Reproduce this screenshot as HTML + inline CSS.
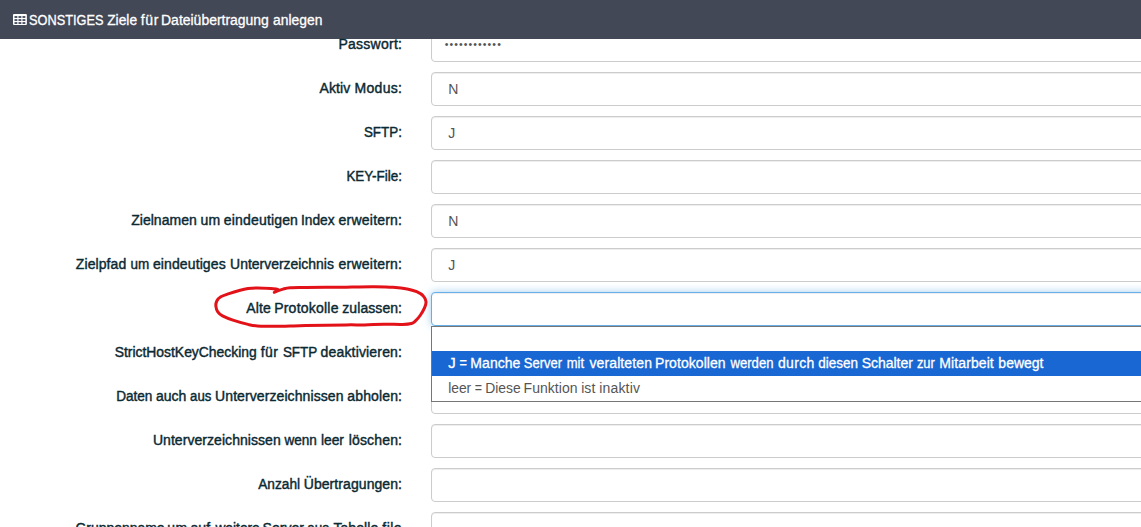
<!DOCTYPE html>
<html lang="de">
<head>
<meta charset="utf-8">
<title>SONSTIGES Ziele für Dateiübertragung anlegen</title>
<style>
html,body{margin:0;padding:0;}
body{width:1141px;height:527px;overflow:hidden;background:#fff;position:relative;font-family:"Liberation Sans", Arial, sans-serif;}
.t{position:absolute;left:0;top:0;white-space:nowrap;line-height:1;margin:0;padding:0;font-weight:normal;display:block;}
.t span{position:absolute;top:0;display:block;transform-origin:0 0;}
.hd{color:#fff;-webkit-text-stroke:0.3px #fff;}
.lb{color:#0b2932;-webkit-text-stroke:0.42px #0b2932;}
.val{color:#555;}
.opt1{color:#fff;-webkit-text-stroke:0.3px #fff;}
.opt2{color:#555;}
.inp{position:absolute;left:431px;width:760px;height:32px;border:1px solid #ccc;border-radius:4px;background:#fff;box-shadow:inset 0 1px 1px rgba(0,0,0,.075);}
.inp.focus{border-color:#66afe9;box-shadow:inset 0 1px 1px rgba(0,0,0,.075),0 0 8px rgba(102,175,233,.6);}
#bar{position:absolute;left:0;top:0;width:1141px;height:39px;background:#434857;}
#dd{position:absolute;left:431px;top:326px;width:760px;height:74px;border:1px solid #767676;background:#fff;}
#dd .hl{position:absolute;left:0;right:0;top:24px;height:25px;background:#1967d2;}
svg{position:absolute;overflow:visible;}

</style>
</head>
<body>
<div class="inp" style="top:28px"></div>
<div class="inp" style="top:72px"></div>
<div class="inp" style="top:116px"></div>
<div class="inp" style="top:160px"></div>
<div class="inp" style="top:204px"></div>
<div class="inp" style="top:248px"></div>
<div class="inp focus" style="top:292px"></div>
<div class="inp" style="top:336px"></div>
<div class="inp" style="top:380px"></div>
<div class="inp" style="top:424px"></div>
<div class="inp" style="top:468px"></div>
<div class="inp" style="top:512px"></div>
<div id="dd"><div class="hl"></div></div>
<header id="bar"></header>
<svg id="ico" style="left:12.6px;top:13.9px" width="13.9" height="10.9" viewBox="0 0 13.9 10.9"><rect x="0" y="0" width="13.9" height="10.9" rx="1" fill="#fff"/><rect x="1.5" y="2.1" width="2.85" height="1.8" fill="#434857"/><rect x="5.5" y="2.1" width="2.85" height="1.8" fill="#434857"/><rect x="9.5" y="2.1" width="2.85" height="1.8" fill="#434857"/><rect x="1.5" y="5.15" width="2.85" height="1.8" fill="#434857"/><rect x="5.5" y="5.15" width="2.85" height="1.8" fill="#434857"/><rect x="9.5" y="5.15" width="2.85" height="1.8" fill="#434857"/><rect x="1.5" y="8.15" width="2.85" height="1.8" fill="#434857"/><rect x="5.5" y="8.15" width="2.85" height="1.8" fill="#434857"/><rect x="9.5" y="8.15" width="2.85" height="1.8" fill="#434857"/></svg>
<svg id="ell" style="left:0;top:0" width="1141" height="527"><path transform="translate(0 0.7)" d="M277.5 288.6 C276.4 288.5 274.1 287.9 270.7 287.7 C267.3 287.5 261.2 287.2 257.4 287.2 C253.6 287.2 251.2 287.4 248.0 287.9 C244.8 288.4 241.7 289.2 238.5 290.0 C235.3 290.8 231.9 291.9 229.0 292.9 C226.1 293.9 222.8 294.8 220.8 296.0 C218.8 297.2 217.6 298.7 216.8 300.3 C216.0 301.9 215.7 303.9 215.9 305.7 C216.1 307.5 216.7 309.6 217.8 311.2 C218.9 312.8 219.8 313.8 222.5 315.2 C225.2 316.6 229.4 318.3 233.7 319.7 C237.9 321.1 244.1 322.8 248.0 323.7 C251.9 324.6 252.7 324.9 257.4 325.2 C262.1 325.5 271.0 325.6 276.4 325.6 C281.8 325.6 285.1 325.4 290.0 325.3 C294.9 325.2 296.5 325.1 305.8 324.9 C315.1 324.7 336.2 324.3 346.0 324.2 C355.8 324.1 358.2 324.3 364.5 324.2 C370.8 324.1 377.2 323.7 383.5 323.6 C389.8 323.5 397.7 323.8 402.4 323.7 C407.1 323.6 409.3 323.4 411.5 322.8 C413.7 322.2 414.2 321.4 415.7 320.0 C417.2 318.6 419.0 316.5 420.5 314.3 C422.0 312.1 423.8 308.9 424.7 306.7 C425.6 304.5 426.2 302.9 426.0 301.0 C425.8 299.1 424.9 297.0 423.3 295.3 C421.8 293.6 419.4 292.2 416.7 291.0 C414.0 289.8 411.1 288.9 407.2 288.2 C403.2 287.5 398.5 287.0 393.0 286.6 C387.5 286.2 380.3 286.1 374.0 286.0 C367.7 285.9 359.7 286.2 355.0 286.3 C350.3 286.4 354.2 286.4 346.0 286.5 C337.8 286.6 315.1 286.6 305.8 286.7 C296.5 286.8 293.8 286.7 290.0 287.0 C286.2 287.3 284.9 287.9 283.0 288.4 C281.1 288.9 279.8 289.3 278.3 289.8 C276.9 290.3 275.0 291.3 274.3 291.6" fill="none" stroke="#e21218" stroke-width="3" stroke-linecap="round" stroke-linejoin="round"/></svg>
<h1 class="t hd" style="top:12.95px;font-size:14px"><span style="left:0;transform:translateX(29.08px) scaleX(0.9107)">SONSTIGES</span> <span style="left:0;transform:translateX(107.17px) scaleX(0.9856)">Ziele</span> <span style="left:140.67px;letter-spacing:0.752px">für</span> <span style="left:0;transform:translateX(161.04px) scaleX(0.9968)">Dateiübertragung</span> <span style="left:0;transform:translateX(273.11px) scaleX(0.9893)">anlegen</span></h1>
<label class="t lb" style="top:37.15px;font-size:14px"><span style="left:338.38px;letter-spacing:0.271px">Passwort:</span></label>
<label class="t lb" style="top:81.15px;font-size:14px"><span style="left:319.49px;letter-spacing:0.105px">Aktiv</span> <span style="left:354.62px;letter-spacing:0.263px">Modus:</span></label>
<label class="t lb" style="top:125.15px;font-size:14px"><span style="left:0;transform:translateX(363.89px) scaleX(0.9571)">SFTP:</span></label>
<label class="t lb" style="top:169.15px;font-size:14px"><span style="left:0;transform:translateX(346.39px) scaleX(0.9612)">KEY-File:</span></label>
<label class="t lb" style="top:213.15px;font-size:14px"><span style="left:131.13px;letter-spacing:0.045px">Zielnamen</span> <span style="left:200.60px;letter-spacing:0.155px">um</span> <span style="left:223.83px;letter-spacing:0.168px">eindeutigen</span> <span style="left:0;transform:translateX(300.98px) scaleX(0.9812)">Index</span> <span style="left:338.62px;letter-spacing:0.215px">erweitern:</span></label>
<label class="t lb" style="top:257.15px;font-size:14px"><span style="left:75.81px;letter-spacing:0.087px">Zielpfad</span> <span style="left:0;transform:translateX(130.43px) scaleX(0.9629)">um</span> <span style="left:152.97px;letter-spacing:0.106px">eindeutiges</span> <span style="left:0;transform:translateX(230.08px) scaleX(0.9956)">Unterverzeichnis</span> <span style="left:338.62px;letter-spacing:0.215px">erweitern:</span></label>
<label class="t lb" style="top:301.15px;font-size:14px"><span style="left:246.27px;letter-spacing:0.140px">Alte</span> <span style="left:274.15px;letter-spacing:0.233px">Protokolle</span> <span style="left:342.29px;letter-spacing:0.071px">zulassen:</span></label>
<label class="t lb" style="top:345.15px;font-size:14px"><span style="left:0;transform:translateX(114.72px) scaleX(0.9914)">StrictHostKeyChecking</span> <span style="left:260.77px;letter-spacing:0.460px">für</span> <span style="left:0;transform:translateX(282.89px) scaleX(0.9620)">SFTP</span> <span style="left:320.62px;letter-spacing:0.161px">deaktivieren:</span></label>
<label class="t lb" style="top:389.15px;font-size:14px"><span style="left:0;transform:translateX(116.14px) scaleX(0.9715)">Daten</span> <span style="left:156.01px">auch</span> <span style="left:0;transform:translateX(190.12px) scaleX(0.9405)">aus</span> <span style="left:215.07px;letter-spacing:0.088px">Unterverzeichnissen</span> <span style="left:347.30px;letter-spacing:0.133px">abholen:</span></label>
<label class="t lb" style="top:433.15px;font-size:14px"><span style="left:152.90px;letter-spacing:0.057px">Unterverzeichnissen</span> <span style="left:0;transform:translateX(284.48px) scaleX(0.9687)">wenn</span> <span style="left:0;transform:translateX(320.88px) scaleX(0.9871)">leer</span> <span style="left:348.71px;letter-spacing:0.163px">löschen:</span></label>
<label class="t lb" style="top:477.15px;font-size:14px"><span style="left:0;transform:translateX(258.18px) scaleX(0.9778)">Anzahl</span> <span style="left:303.73px;letter-spacing:0.074px">Übertragungen:</span></label>
<label class="t lb" style="top:521.25px;font-size:14px"><span style="left:0;transform:translateX(75.43px) scaleX(0.9966)">Gruppenname</span> <span style="left:167.31px;letter-spacing:0.436px">um</span> <span style="left:0;transform:translateX(190.46px) scaleX(1.0132)">auf</span> <span style="left:0;transform:translateX(215.42px) scaleX(0.9827)">weitere</span> <span style="left:0;transform:translateX(262.58px) scaleX(1.0025)">Server</span> <span style="left:0;transform:translateX(307.30px) scaleX(0.9663)">aus</span> <span style="left:333.43px;letter-spacing:0.073px">Tabelle</span> <span style="left:382.32px;letter-spacing:0.463px">file</span></label>
<div class="t val" style="top:82.15px;font-size:14px"><span style="left:448.37px">N</span></div>
<div class="t val" style="top:126.15px;font-size:14px"><span style="left:448.33px">J</span></div>
<div class="t val" style="top:214.15px;font-size:14px"><span style="left:448.37px">N</span></div>
<div class="t val" style="top:258.15px;font-size:14px"><span style="left:448.33px">J</span></div>
<div class="t val pw" style="top:38.91px;font-size:10.5px"><span style="left:444.65px;letter-spacing:1.097px">••••••••••••</span></div>
<div class="t opt1" style="top:356.05px;font-size:14px"><span style="left:0;transform:translateX(448.22px) scaleX(1.0630)">J</span> <span style="left:0;transform:translateX(459.55px) scaleX(0.9103)">=</span> <span style="left:470.36px;letter-spacing:0.036px">Manche</span> <span style="left:0;transform:translateX(523.76px) scaleX(0.9281)">Server</span> <span style="left:0;transform:translateX(566.73px) scaleX(0.9306)">mit</span> <span style="left:589.44px;letter-spacing:0.114px">veralteten</span> <span style="left:655.00px;letter-spacing:0.062px">Protokollen</span> <span style="left:0;transform:translateX(730.50px) scaleX(0.9352)">werden</span> <span style="left:778.02px;letter-spacing:0.301px">durch</span> <span style="left:0;transform:translateX(818.28px) scaleX(0.9629)">diesen</span> <span style="left:861.66px;letter-spacing:-0.022px">Schalter</span> <span style="left:0;transform:translateX(916.88px) scaleX(0.9218)">zur</span> <span style="left:939.36px;letter-spacing:0.089px">Mitarbeit</span> <span style="left:998.37px">bewegt</span></div>
<div class="t opt2" style="top:380.85px;font-size:14px"><span style="left:0;transform:translateX(448.17px) scaleX(0.9871)">leer</span> <span style="left:0;transform:translateX(474.84px) scaleX(0.8904)">=</span> <span style="left:0;transform:translateX(485.25px) scaleX(0.9924)">Diese</span> <span style="left:523.58px;letter-spacing:0.032px">Funktion</span> <span style="left:581.13px;letter-spacing:0.094px">ist</span> <span style="left:599.34px;letter-spacing:0.150px">inaktiv</span></div>
</body>
</html>
